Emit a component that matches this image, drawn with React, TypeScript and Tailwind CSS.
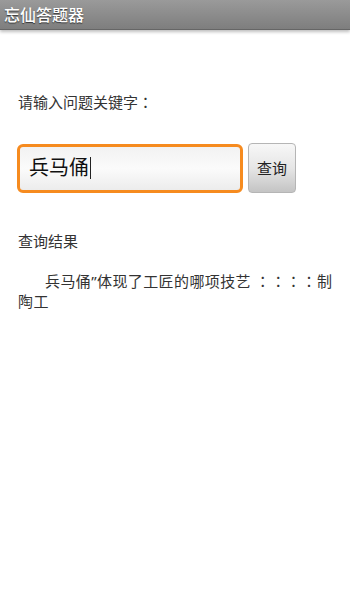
import React from 'react';

const font = { fontFamily: '"Noto Sans", "Noto Sans CJK SC", sans-serif' };

// full-width colons centred in their cell, as the reference shows
const Colon = ({ children }: { children: React.ReactNode }) => (
  <span style={{ fontFamily: '"Noto Sans CJK TC", sans-serif' }}>{children}</span>
);

const App = () => {
  return (
    <div className="w-[350px] h-[600px] bg-white text-[#333]" style={font}>
      <div className="h-[30px] bg-gradient-to-b from-[#9a9a9a] to-[#7e7e7e] border-b border-[#666] shadow-[0_2px_3px_rgba(0,0,0,0.25)] flex items-center px-[4px]">
        <span className="text-white text-[16px] font-medium leading-none [text-shadow:0_1px_1px_rgba(0,0,0,0.6)]">忘仙答题器</span>
      </div>

      <div className="pl-[18px] pr-[12px]">
        <div className="pt-[62px] text-[15px] leading-[20px]">
          请输入问题关键字<Colon>：</Colon>
        </div>

        <div className="mt-[31px] flex items-center gap-[5px] -ml-[1px]">
          <div className="w-[226px] h-[49px] rounded-[6px] border-[3px] border-[#f68b1f] bg-gradient-to-b from-[#f2f2f2] via-[#fbfbfb] to-[#ececec] flex items-center pl-[9px]">
            <span className="text-[20px] text-[#111] leading-none">兵马俑</span>
            <span className="w-[1px] h-[22px] bg-[#222] ml-[1px]" />
          </div>
          <div className="w-[48px] h-[50px] rounded-[4px] border border-[#b5b5b5] bg-gradient-to-b from-[#f7f7f7] via-[#e6e6e6] to-[#c4c4c4] flex items-center justify-center">
            <span className="text-[15px] text-[#222]">查询</span>
          </div>
        </div>

        <div className="mt-[38px] text-[15px] leading-[20px]">查询结果</div>

        <p className="mt-[20px] text-[15px] leading-[20px] indent-[27px] tracking-[0.4px]">
          兵马俑”体现了工匠的哪项技艺 <Colon>：：：：</Colon>制陶工
        </p>
      </div>
    </div>
  );
};

export default App;
